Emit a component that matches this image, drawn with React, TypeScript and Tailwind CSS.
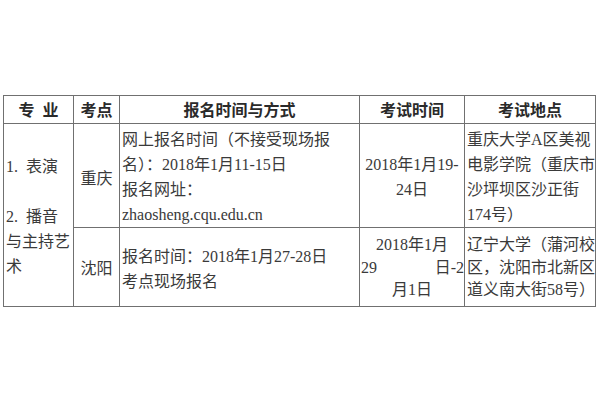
export default function App() {
  const font = { fontFamily: '"Liberation Serif", "Noto Sans CJK SC", serif' }
  const cell = 'border border-[#707070] p-0 align-middle'

  return (
    <div className="min-h-[400px] w-[600px] bg-white pt-[95px] pl-[3px] text-[#3a3a3a]" style={font}>
      <table className="table-fixed border-collapse text-[16px] leading-[25px]">
        <colgroup>
          <col className="w-[70px]" />
          <col className="w-[46px]" />
          <col className="w-[240px]" />
          <col className="w-[105px]" />
          <col className="w-[131px]" />
        </colgroup>
        <thead>
          <tr className="h-[27px] font-medium text-[#2a2a2a]">
            <th className={`${cell} pt-[2px] text-center`}>专&nbsp;&nbsp;业</th>
            <th className={`${cell} pt-[2px] text-center`}>考点</th>
            <th className={`${cell} pt-[2px] text-center`}>报名时间与方式</th>
            <th className={`${cell} pt-[2px] text-center`}>考试时间</th>
            <th className={`${cell} pt-[2px] text-center`}>考试地点</th>
          </tr>
        </thead>
        <tbody>
          <tr className="h-[102px]">
            <td rowSpan={2} className={`${cell} pl-[2px] pt-[3px] whitespace-nowrap`}>
              <div>1.&nbsp;&nbsp;表演</div>
              <div>&nbsp;</div>
              <div>2.&nbsp;&nbsp;播音</div>
              <div>与主持艺</div>
              <div>术</div>
            </td>
            <td className={`${cell} pt-[6px] text-center`}>重庆</td>
            <td className={`${cell} pl-[2px] pt-[3px] whitespace-nowrap`}>
              <div>网上报名时间（不接受现场报</div>
              <div>名）：2018年1月11-15日</div>
              <div>报名网址：</div>
              <div>zhaosheng.cqu.edu.cn</div>
            </td>
            <td className={`${cell} pt-[3px] text-center whitespace-nowrap`}>
              <div>2018年1月19-</div>
              <div>24日</div>
            </td>
            <td className={`${cell} pl-[2px] pt-[3px] whitespace-nowrap`}>
              <div>重庆大学A区美视</div>
              <div>电影学院（重庆市</div>
              <div>沙坪坝区沙正街</div>
              <div>174号）</div>
            </td>
          </tr>
          <tr className="h-[79px]">
            <td className={`${cell} pt-[3px] text-center`}>沈阳</td>
            <td className={`${cell} pl-[2px] pt-[3px] whitespace-nowrap`}>
              <div>报名时间：2018年1月27-28日</div>
              <div>考点现场报名</div>
            </td>
            <td className={`${cell} pt-[2px] leading-[22.5px] whitespace-nowrap`}>
              <div className="text-center">2018年1月</div>
              <div className="flex justify-between pl-[1px]">
                <span>29</span>
                <span>日-2</span>
              </div>
              <div className="text-center">月1日</div>
            </td>
            <td className={`${cell} pl-[2px] pt-[2px] leading-[22.5px] whitespace-nowrap`}>
              <div>辽宁大学（蒲河校</div>
              <div>区，沈阳市北新区</div>
              <div>道义南大街58号）</div>
            </td>
          </tr>
        </tbody>
      </table>
    </div>
  )
}
